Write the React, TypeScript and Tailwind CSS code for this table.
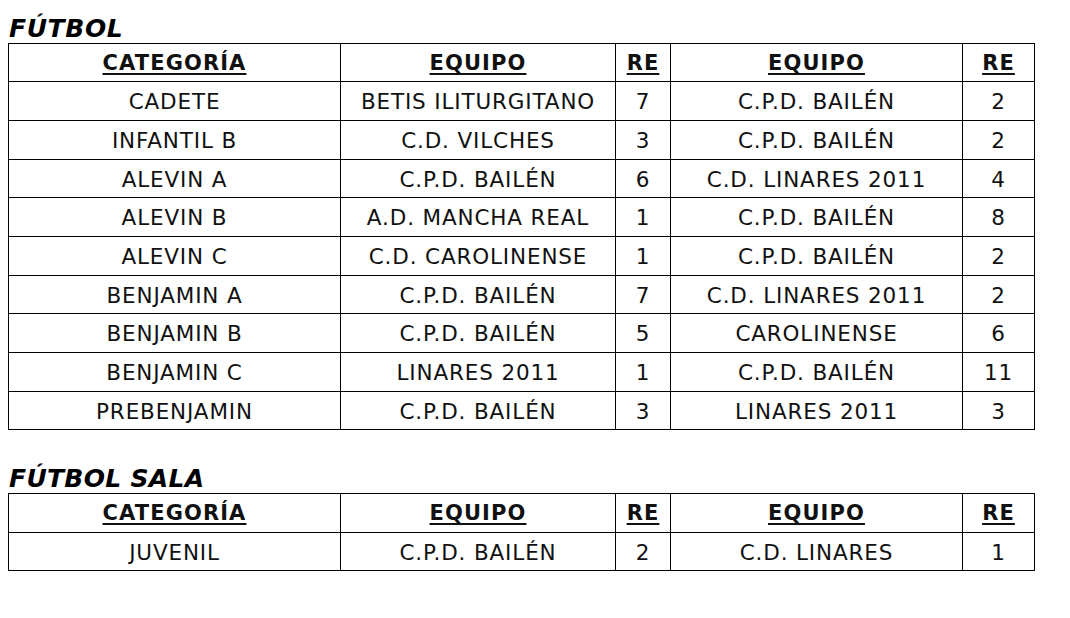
import React from "react";

const futbol: [string, string, string, string, string][] = [
  ["CADETE", "BETIS ILITURGITANO", "7", "C.P.D. BAILÉN", "2"],
  ["INFANTIL B", "C.D. VILCHES", "3", "C.P.D. BAILÉN", "2"],
  ["ALEVIN A", "C.P.D. BAILÉN", "6", "C.D. LINARES 2011", "4"],
  ["ALEVIN B", "A.D. MANCHA REAL", "1", "C.P.D. BAILÉN", "8"],
  ["ALEVIN C", "C.D. CAROLINENSE", "1", "C.P.D. BAILÉN", "2"],
  ["BENJAMIN A", "C.P.D. BAILÉN", "7", "C.D. LINARES 2011", "2"],
  ["BENJAMIN B", "C.P.D. BAILÉN", "5", "CAROLINENSE", "6"],
  ["BENJAMIN C", "LINARES 2011", "1", "C.P.D. BAILÉN", "11"],
  ["PREBENJAMIN", "C.P.D. BAILÉN", "3", "LINARES 2011", "3"],
];

const sala: [string, string, string, string, string][] = [
  ["JUVENIL", "C.P.D. BAILÉN", "2", "C.D. LINARES", "1"],
];

function ResultsTable({ rows }: { rows: [string, string, string, string, string][] }) {
  const headers = ["CATEGORÍA", "EQUIPO", "RE", "EQUIPO", "RE"];
  return (
    <table className="border-collapse table-fixed w-[1026px] ml-[8px] text-[#111]">
      <colgroup>
        <col className="w-[332px]" />
        <col className="w-[275px]" />
        <col className="w-[55px]" />
        <col className="w-[292px]" />
        <col className="w-[72px]" />
      </colgroup>
      <thead>
        <tr className="h-[38.4px]">
          {headers.map((h, i) => (
            <th key={i} className="border border-black p-0 pt-[1px] text-center font-bold text-[21px] tracking-[1.1px] leading-none">
              <span className="underline underline-offset-[3px] decoration-[1.5px]">{h}</span>
            </th>
          ))}
        </tr>
      </thead>
      <tbody>
        {rows.map((r, ri) => (
          <tr key={ri} className="h-[38.65px]">
            {r.map((c, ci) => (
              <td key={ci} className="border border-black p-0 pt-[2px] text-center text-[21.5px] tracking-[0.85px] leading-none whitespace-nowrap">
                {c}
              </td>
            ))}
          </tr>
        ))}
      </tbody>
    </table>
  );
}

export default function App() {
  return (
    <div className="w-[1070px] h-[618px] bg-white overflow-hidden" style={{ fontFamily: '"DejaVu Sans", Verdana, sans-serif' }}>
      <div className="h-[43px] flex items-end pl-[9px] pb-[1px]">
        <h2 className="text-[25px] font-bold italic leading-[26px] tracking-[0.6px] text-black">FÚTBOL</h2>
      </div>
      <ResultsTable rows={futbol} />
      <div className="h-[63px] flex items-end pl-[9px] pb-[1px]">
        <h2 className="text-[25px] font-bold italic leading-[26px] tracking-[0.3px] text-black">FÚTBOL SALA</h2>
      </div>
      <ResultsTable rows={sala} />
    </div>
  );
}
